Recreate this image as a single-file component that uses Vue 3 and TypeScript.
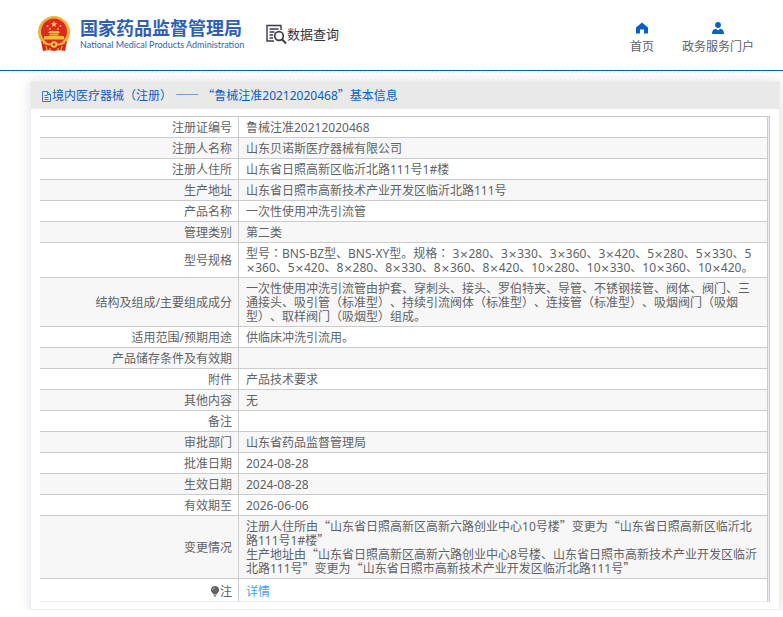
<script setup lang="ts">
interface Row {
  label: string
  value: string
}

interface Piece {
  text: string
  kind: string
}

const title = '境内医疗器械（注册） —— “鲁械注准20212020468”基本信息'

const rows: Row[] = [
  { label: '注册证编号', value: '鲁械注准20212020468' },
  { label: '注册人名称', value: '山东贝诺斯医疗器械有限公司' },
  { label: '注册人住所', value: '山东省日照高新区临沂北路111号1#楼' },
  { label: '生产地址', value: '山东省日照市高新技术产业开发区临沂北路111号' },
  { label: '产品名称', value: '一次性使用冲洗引流管' },
  { label: '管理类别', value: '第二类' },
  {
    label: '型号规格',
    value:
      '型号：BNS-BZ型、BNS-XY型。规格： 3×280、3×330、3×360、3×420、5×280、5×330、5\n×360、5×420、8×280、8×330、8×360、8×420、10×280、10×330、10×360、10×420。',
  },
  {
    label: '结构及组成/主要组成成分',
    value:
      '一次性使用冲洗引流管由护套、穿刺头、接头、罗伯特夹、导管、不锈钢接管、阀体、阀门、三\n通接头、吸引管（标准型）、持续引流阀体（标准型）、连接管（标准型）、吸烟阀门（吸烟\n型）、取样阀门（吸烟型）组成。',
  },
  { label: '适用范围/预期用途', value: '供临床冲洗引流用。' },
  { label: '产品储存条件及有效期', value: '' },
  { label: '附件', value: '产品技术要求' },
  { label: '其他内容', value: '无' },
  { label: '备注', value: '' },
  { label: '审批部门', value: '山东省药品监督管理局' },
  { label: '批准日期', value: '2024-08-28' },
  { label: '生效日期', value: '2024-08-28' },
  { label: '有效期至', value: '2026-06-06' },
  {
    label: '变更情况',
    value:
      '注册人住所由“山东省日照高新区高新六路创业中心10号楼”变更为“山东省日照高新区临沂北\n路111号1#楼”\n生产地址由“山东省日照高新区高新六路创业中心8号楼、山东省日照市高新技术产业开发区临沂\n北路111号”变更为“山东省日照市高新技术产业开发区临沂北路111号”',
  },
]

// Punctuation and signs that take their form from another font than the text.
function kindOf(part: string): string {
  if (/[“”—]/.test(part)) return 'wide'
  if (part === '：') return 'middle'
  if (part === '×') return 'sign'
  return ''
}

function pieces(text: string): Piece[] {
  return text
    .split(/([“”—]+|：|×)/)
    .filter((part) => part !== '')
    .map((part) => ({ text: part, kind: kindOf(part) }))
}
</script>

<template>
  <div class="page" lang="zh-CN">
    <header class="top">
      <a class="brand" href="#">
        <svg class="emblem" viewBox="0 0 32 36" aria-hidden="true">
          <circle cx="16" cy="16" r="16" fill="#f0b83c" />
          <circle cx="16" cy="16" r="14.6" fill="none" stroke="#e0a42c" stroke-width=".8" stroke-dasharray="1.5 1" />
          <circle cx="16" cy="15.5" r="13" fill="#dc2a20" />
          <path d="M16 5l.9 2 2.2.2-1.7 1.500.5 2.100-1.900-1.100-1.900 1.100.5-2.100-1.700-1.500 2.200-.2z" fill="#f8d04a" />
          <g fill="#f4b93e">
            <circle cx="9.5" cy="10" r="1" />
            <circle cx="12" cy="13" r=".9" />
            <circle cx="20" cy="13" r=".9" />
            <circle cx="22.5" cy="10" r="1" />
            <path d="M11.5 15h9l1.5 2H10zM11.5 17.5h9v2h-9zM6.5 20h19l1 3.5h-21z" />
          </g>
          <path d="M3 25c3 2 8 2 13 2s10 0 13-2l-2 10-6-1-5 1-5-1-6 1z" fill="#d8261c" />
          <path d="M5 25.5c3 1.5 6 2 8 2v2c-3 0-6-1-8-2zM27 25.5c-3 1.5-6 2-8 2v2c3 0 6-1 8-2z" fill="#f4b93e" />
          <circle cx="16" cy="28.5" r="3.2" fill="#f6c644" />
          <circle cx="16" cy="28.5" r="1.3" fill="#d8261c" />
          <path d="M8 30l1 4M24 30l-1 4M12 32v3M20 32v3" stroke="#efb23a" stroke-width="1.2" />
        </svg>
        <span class="names">
          <span class="cn">国家药品监督管理局</span>
          <span class="en">National Medical Products Administration</span>
        </span>
      </a>
      <a class="query" href="#">
        <svg class="query-icon" viewBox="0 0 21 21" fill="none" stroke="#3d3a4d" aria-hidden="true">
          <path d="M8 17H1V1.5h14V6" stroke-width="1.4" />
          <path d="M3.5 5h9M3.5 8h5M3.5 11h3.5M3.5 14h3.5" stroke-width="1.3" />
          <circle cx="13" cy="12" r="4.3" stroke-width="1.7" />
          <path d="M16 15.3l4 4.2" stroke-width="2" />
        </svg>
        <span>数据查询</span>
      </a>
      <nav class="nav">
        <a href="#">
          <svg viewBox="0 0 12 12" aria-hidden="true">
            <path d="M6 .5l6 5v6H8V7.5H4v4H0v-6z" fill="#0860c4" />
          </svg>
          <span>首页</span>
        </a>
        <a href="#">
          <svg viewBox="0 0 12 12" aria-hidden="true">
            <circle cx="6" cy="3" r="2.9" fill="#0860c4" />
            <path d="M0 12C0 8.5 1.5 7 4 6.8l2 1.8 2-1.8c2.5.2 4 1.7 4 5.2z" fill="#0860c4" />
          </svg>
          <span>政务服务门户</span>
        </a>
      </nav>
    </header>
    <div class="hatch"></div>

    <main class="card">
      <h1 class="card-title">
        <svg viewBox="0 0 11 12" fill="none" stroke="#0860c4" stroke-width=".8" aria-hidden="true">
          <path d="M1.5 1.5h5l3 3v7h-8zM6.5 1.5v3h3M3.5 5.5h3M3.5 7.5h4M3.5 9.5h4" />
        </svg>
        <span><span v-for="(p, i) in pieces(title)" :key="i" :class="p.kind">{{ p.text }}</span></span>
      </h1>
      <div class="frame">
        <table>
          <tbody>
            <tr v-for="row in rows" :key="row.label">
              <th scope="row">{{ row.label }}</th>
              <td><span v-for="(p, i) in pieces(row.value)" :key="i" :class="p.kind" :lang="p.kind === 'middle' ? 'zh-TW' : undefined">{{ p.text }}</span></td>
            </tr>
            <tr class="note">
              <th scope="row">
                <svg viewBox="0 0 10 12" aria-hidden="true">
                  <path d="M5 1a4 4 0 0 1 2.300 7.300L6.500 9.500h-3l-.8-1.200A4 4 0 0 1 5 1zM3.500 10.200h3L6 11.500H4z" fill="#606266" />
                  <path d="M2.800 5C2.800 3.700 3.700 2.800 5 2.800" fill="none" stroke="#c8c9cc" stroke-width=".8" />
                </svg>注
              </th>
              <td><a href="#">详情</a></td>
            </tr>
          </tbody>
        </table>
      </div>
    </main>
  </div>
</template>

<style>
body {
  margin: 0;
  background: #fff;
}
</style>

<style scoped>
.page {
  font-family: "Noto Sans", "Noto Sans CJK SC", sans-serif;
  font-size: 12px;
  line-height: 14px;
  color: #606266;
  text-spacing-trim: space-all;
}

a {
  color: inherit;
  text-decoration: none;
}

svg {
  display: block;
  flex: none;
}

.top {
  box-sizing: border-box;
  height: 71px;
  display: flex;
  align-items: center;
  padding: 0 29px 2px 38px;
  border-bottom: 1px solid #0860c4;
}

.brand {
  display: flex;
  align-items: center;
  gap: 10px;
  color: #2f5fb3;
}

.emblem {
  width: 32px;
  height: 36px;
}

.names {
  display: flex;
  flex-direction: column;
  width: 162px;
  white-space: nowrap;
}

.cn {
  font-family: "Noto Sans CJK SC", sans-serif;
  font-size: 18px;
  line-height: 22px;
  font-weight: 700;
}

.en {
  font-family: Lato, sans-serif;
  font-size: 9px;
  line-height: 14px;
}

.query {
  display: flex;
  align-items: center;
  margin-left: 24px;
  font-size: 13px;
  line-height: 20px;
  color: #33333d;
}

.query-icon {
  width: 21px;
  height: 21px;
}

.nav {
  display: flex;
  gap: 28px;
  margin-left: auto;
  padding-top: 8px;
}

.nav a {
  display: flex;
  flex-direction: column;
  align-items: center;
  gap: 6px;
}

.nav svg {
  width: 12px;
  height: 12px;
}

.hatch {
  height: 2px;
  background: repeating-linear-gradient(135deg, #ededed 0 1px, #fff 1px 3px);
}

.card {
  margin: 8px 3px 0 30px;
  border: 1px solid #ebeef5;
  box-shadow: 0 0 12px rgba(0, 0, 0, 0.12);
  padding-bottom: 7px;
}

.card-title {
  display: flex;
  align-items: center;
  margin: 0;
  height: 27px;
  padding-left: 10px;
  background: #e9e9e9;
  font-size: 12px;
  font-weight: 400;
  color: #0860c4;
}

.card-title svg {
  width: 11px;
  height: 12px;
}

.wide,
.middle,
.sign {
  line-height: 10px;
}

.wide {
  font-family: "Noto Sans CJK SC", sans-serif;
}

.middle {
  font-family: "Noto Sans CJK TC", sans-serif;
}

.sign {
  font-family: "DejaVu Sans", sans-serif;
  font-size: 11px;
}

.frame {
  margin: 7px 9px 0;
  border-top: 1px solid #cacbcf;
  border-right: 1px solid #cacbcf;
  padding-right: 1px;
  background: #ebeef5;
}

table {
  width: 100%;
  border-collapse: separate;
  border-spacing: 0;
  table-layout: fixed;
  background: #fff;
}

th,
td {
  height: 14px;
  padding: 4px 6px 2px;
  border-right: 1px solid #cacbcf;
  border-bottom: 1px solid #cacbcf;
  font-weight: 400;
  vertical-align: middle;
}

th {
  width: 186px;
  text-align: right;
}

td {
  padding-left: 7px;
  padding-right: 0;
  white-space: pre-line;
}

tr:nth-child(even) {
  background: #f7f7f7;
}

.note th,
.note td {
  padding-top: 6px;
  border-bottom-color: #ebeef5;
}

.note svg {
  display: inline-block;
  width: 10px;
  height: 12px;
  vertical-align: -1px;
}

.note a {
  color: #409eff;
}
</style>
